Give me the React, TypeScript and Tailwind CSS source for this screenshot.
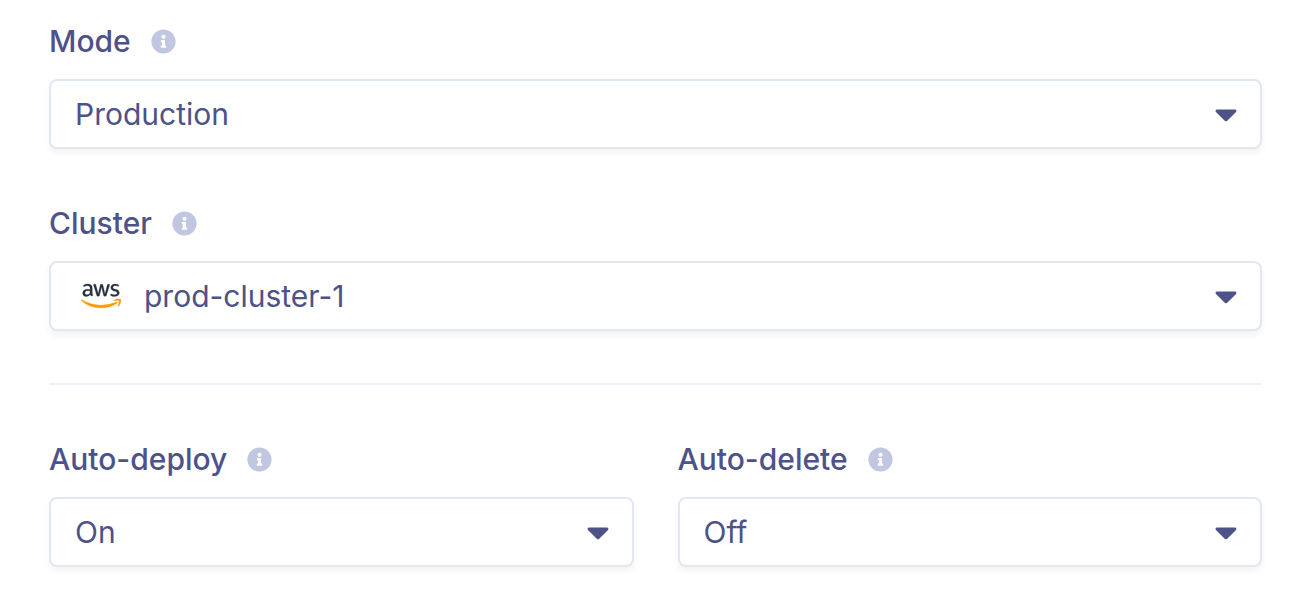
import { useId, type ReactNode } from "react";
import { FaAws, FaCaretDown, FaInfoCircle } from "react-icons/fa";

type SelectFieldProps = {
  label: string;
  options: string[];
  icon?: ReactNode;
};

function AwsLogo() {
  return (
    <>
      <svg className="size-0 absolute" aria-hidden="true">
        <defs>
          <linearGradient id="aws-fill" gradientUnits="userSpaceOnUse" x1="0" y1="0" x2="0" y2="512">
            <stop offset="0.585" stopColor="#252f3e" />
            <stop offset="0.585" stopColor="#ff9900" />
          </linearGradient>
        </defs>
      </svg>
      <FaAws
        className="h-8 w-10"
        fill="url(#aws-fill)"
        stroke="url(#aws-fill)"
        strokeWidth="4"
        aria-hidden="true"
      />
    </>
  );
}

function SelectField({ label, options, icon }: SelectFieldProps) {
  const id = useId();
  return (
    <div className="flex flex-col gap-5">
      <div className="flex items-center gap-5">
        <label htmlFor={id} className="text-[30px] leading-9 font-medium">
          {label}
        </label>
        <button type="button" aria-label={`About ${label}`} className="text-[#c1c7e0]">
          <FaInfoCircle className="size-[25px]" />
        </button>
      </div>
      <div className="relative">
        <select
          id={id}
          className={`h-[70px] w-full appearance-none rounded-lg border-2 border-[#e1e8f3] bg-white pr-16 text-[30px] shadow-[0_4px_6px_rgba(0,0,0,0.05)] ${icon ? "pl-[93px]" : "pl-6"}`}
        >
          {options.map((option) => (
            <option key={option}>{option}</option>
          ))}
        </select>
        {icon && (
          <span className="pointer-events-none absolute inset-y-0 left-8 flex items-center">{icon}</span>
        )}
        <span className="pointer-events-none absolute inset-y-0 right-[18px] flex items-center">
          <FaCaretDown className="size-9" aria-hidden="true" />
        </span>
      </div>
    </div>
  );
}

export default function App() {
  return (
    <form className="flex flex-col bg-white px-[49px] pt-[23px] pb-6 font-['Inter',sans-serif] text-[#4d5288]">
      <div className="flex flex-col gap-14">
        <SelectField label="Mode" options={["Production", "Development"]} />
        <SelectField label="Cluster" options={["prod-cluster-1"]} icon={<AwsLogo />} />
      </div>
      <hr className="mt-[52px] mb-14 border-t-2 border-[#edf1f8]" />
      <div className="grid grid-cols-2 gap-11">
        <SelectField label="Auto-deploy" options={["On", "Off"]} />
        <SelectField label="Auto-delete" options={["Off", "On"]} />
      </div>
    </form>
  );
}
